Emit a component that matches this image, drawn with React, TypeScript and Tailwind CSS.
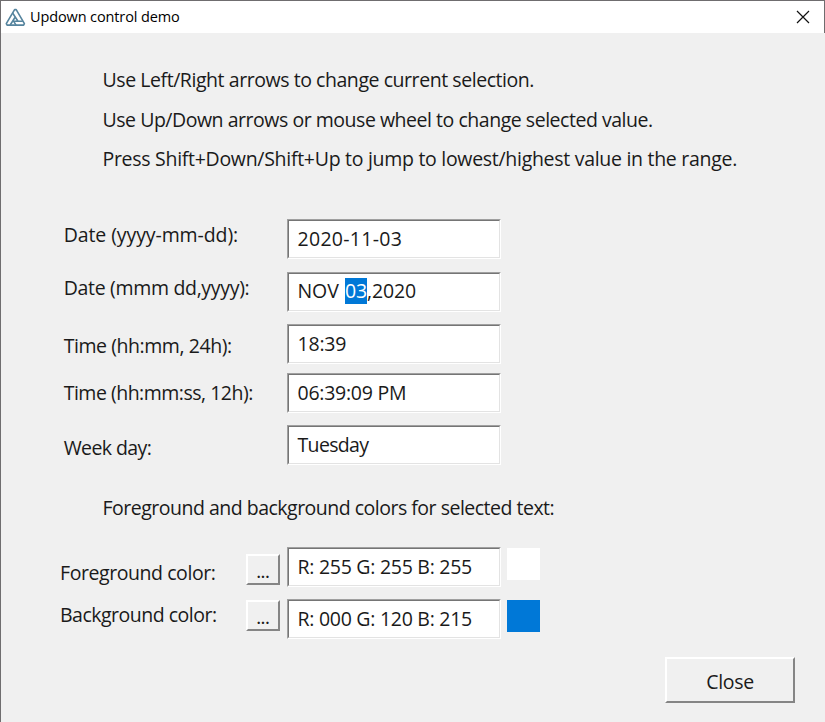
import type { ReactNode } from "react";

const text = "text-[19.5px] leading-[24px] whitespace-pre";

function Field({ children }: { children: ReactNode }) {
  return (
    <div className="h-10 w-[214px] shrink-0 border border-t-[#a0a0a0] border-l-[#a0a0a0] border-r-white border-b-white">
      <div className={`h-full border border-t-[#757575] border-l-[#757575] border-r-[#e3e3e3] border-b-[#e3e3e3] bg-white pl-[8.5px] pt-[6px] ${text}`}>
        {children}
      </div>
    </div>
  );
}

function Row({ className, label, labelClass, children }: { className: string; label: string; labelClass: string; children: ReactNode }) {
  return (
    <div className={`flex items-start pl-[62px] ${className}`}>
      <div className="w-[224px] shrink-0 pl-[0.7px]">
        <span className={`block w-max ${text} ${labelClass}`}>{label}</span>
      </div>
      <Field>{children}</Field>
    </div>
  );
}

function ColorRow({ className, label, labelClass, dotsClass, swatch, children }: { className: string; label: string; labelClass: string; dotsClass: string; swatch: string; children: ReactNode }) {
  return (
    <div className={`flex items-start pl-[59px] ${className}`}>
      <div className="w-[186px] shrink-0">
        <span className={`block w-max ${text} ${labelClass}`}>{label}</span>
      </div>
      <button className={`h-[31px] w-[34px] shrink-0 border-2 border-t-white border-l-white border-r-[#858585] border-b-[#858585] bg-[#f0f0f0] pt-[4px] text-[16px] leading-[22px] font-semibold ${dotsClass}`}>
        ...
      </button>
      <div className="w-[7px] shrink-0" />
      <Field>{children}</Field>
      <div className={`mt-px ml-[6px] h-8 w-[33px] shrink-0 ${swatch}`} />
    </div>
  );
}

export default function App() {
  return (
    <div className="flex h-[722px] w-[825px] flex-col overflow-hidden border-t border-l border-[#6f6d6f] bg-[#f0f0f0] font-['Open_Sans','Noto_Sans',sans-serif] text-[#1a1a1a]">
      <header className="flex h-8 shrink-0 items-center border-r border-[#6f6d6f] bg-white pl-[4px]">
        <svg width="21" height="19" viewBox="0 0 21 19" fill="none" stroke="#55849e" strokeWidth="1.6" strokeLinejoin="round">
          <path d="M9.6 1.6h1.6L19.4 15.6l-.8 1.5H2.1l-.8-1.5z" />
          <path d="M7.6 5L13 13.2M8.6 13.2h9.2M10.4 8.8L5.2 17M8.6 13.2l2.4 3.9" />
        </svg>
        <span className="ml-[4px] text-[14.5px] leading-5 tracking-[-0.12px] text-black">Updown control demo</span>
        <svg className="mr-[14px] ml-auto" width="14" height="14" viewBox="0 0 14 14" stroke="#111" strokeWidth="1.2">
          <path d="M1 1l12 12M13 1L1 13" />
        </svg>
      </header>
      <main className="flex grow flex-col">
        <div className={`flex h-[186px] shrink-0 flex-col pt-[35px] pl-[101.5px] ${text}`}>
          <span className="mb-4 w-max tracking-[-0.44px]">Use Left/Right arrows to change current selection.</span>
          <span className="mb-[15px] w-max tracking-[-0.47px]">Use Up/Down arrows or mouse wheel to change selected value.</span>
          <span className="w-max tracking-[-0.29px]">Press Shift+Down/Shift+Up to jump to lowest/highest value in the range.</span>
        </div>
        <Row className="h-[53px]" label="Date (yyyy-mm-dd):" labelClass="mt-[4px] tracking-[-0.1px]">
          <span className="tracking-[0.3px]">2020-11-03</span>
        </Row>
        <Row className="h-[52px]" label="Date (mmm dd,yyyy):" labelClass="mt-[4px] tracking-[-0.32px]">
          <div className="-mt-[2px] flex leading-[26px]">
            <span className="w-[47.5px] tracking-[-0.1px]">NOV </span>
            <span className="h-[26px] w-[22px] bg-[#0078d7] tracking-[-0.2px] text-white">03</span>
            <span className="tracking-[-0.1px]">,2020</span>
          </div>
        </Row>
        <Row className="h-[49px]" label="Time (hh:mm, 24h):" labelClass="mt-[10px] tracking-[-0.44px]">
          <span className="tracking-[-0.2px]">18:39</span>
        </Row>
        <Row className="h-[52px]" label="Time (hh:mm:ss, 12h):" labelClass="mt-[8px] tracking-[-0.5px]">
          <span className="tracking-[-0.25px]">06:39:09 PM</span>
        </Row>
        <Row className="h-[70px]" label="Week day:" labelClass="mt-[11px] tracking-[-0.6px]">
          <span className="tracking-[-0.65px]">Tuesday</span>
        </Row>
        <p className={`h-[52px] shrink-0 pt-px pl-[101.5px] tracking-[-0.5px] ${text}`}>Foreground and background colors for selected text:</p>
        <ColorRow className="h-[52px]" label="Foreground color:" labelClass="mt-[14px] tracking-[-0.43px]" dotsClass="mt-[7px]" swatch="bg-white">
          <span className="tracking-[-0.27px]">R: 255 G: 255 B: 255</span>
        </ColorRow>
        <ColorRow className="h-[58px]" label="Background color:" labelClass="mt-[4px] tracking-[-0.5px]" dotsClass="mt-[1px]" swatch="bg-[#0078d7]">
          <span className="tracking-[-0.27px]">R: 000 G: 120 B: 215</span>
        </ColorRow>
        <div className="mr-[30px] flex justify-end">
          <button className={`h-[46px] w-[130px] border-2 border-t-white border-l-white border-r-[#858585] border-b-[#858585] bg-[#f0f0f0] pt-[3px] tracking-[-0.3px] ${text}`}>Close</button>
        </div>
      </main>
    </div>
  );
}
